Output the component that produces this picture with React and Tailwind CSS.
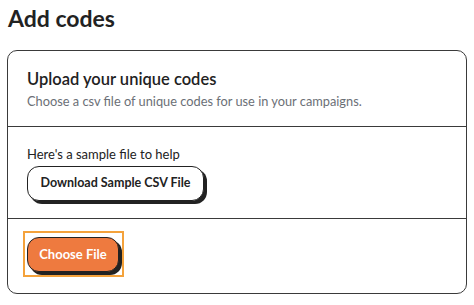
import React from 'react';

const App = () => {
  return (
    <div className="min-h-screen bg-white px-[7px] pt-[2px] text-[#222] font-['Lato','Liberation_Sans',sans-serif]">
      <h1 className="text-[23px] leading-[32px] font-bold ml-[1px] mb-[16px]">Add codes</h1>

      <div className="w-[460px] h-[244px] border-[1.5px] border-[#3a3a3a] rounded-[10px] flex flex-col">
        {/* Header */}
        <div className="px-[19px] pt-[16px] pb-[16px] border-b-[1.5px] border-[#3a3a3a]">
          <h2 className="text-[16.5px] leading-[24px] font-semibold">Upload your unique codes</h2>
          <p className="text-[12.8px] leading-[18px] text-[#6b6f76] mt-[1px]">
            Choose a csv file of unique codes for use in your campaigns.
          </p>
        </div>

        {/* Sample file */}
        <div className="px-[19px] pt-[17px] pb-[17px] border-b-[1.5px] border-[#3a3a3a]">
          <p className="text-[13px] leading-[20px]">Here's a sample file to help</p>
          <button className="mt-[2px] h-[35px] w-[177px] border-[1.5px] border-[#222] rounded-[12px] bg-white text-[12.5px] font-bold shadow-[3px_3px_0_#222]">
            Download Sample CSV File
          </button>
        </div>

        {/* Choose file */}
        <div className="px-[15px] pt-[12px]">
          <div className="inline-flex border-2 border-[#F4A23B] pl-[2px] pt-[4px] pr-[3px] pb-[3px]">
            <button className="h-[35px] w-[92px] border-[1.5px] border-[#222] rounded-[12px] bg-[#EE7A3F] text-white text-[13px] font-bold shadow-[3px_3px_0_#222]">
              Choose File
            </button>
          </div>
        </div>
      </div>
    </div>
  );
};

export default App;
